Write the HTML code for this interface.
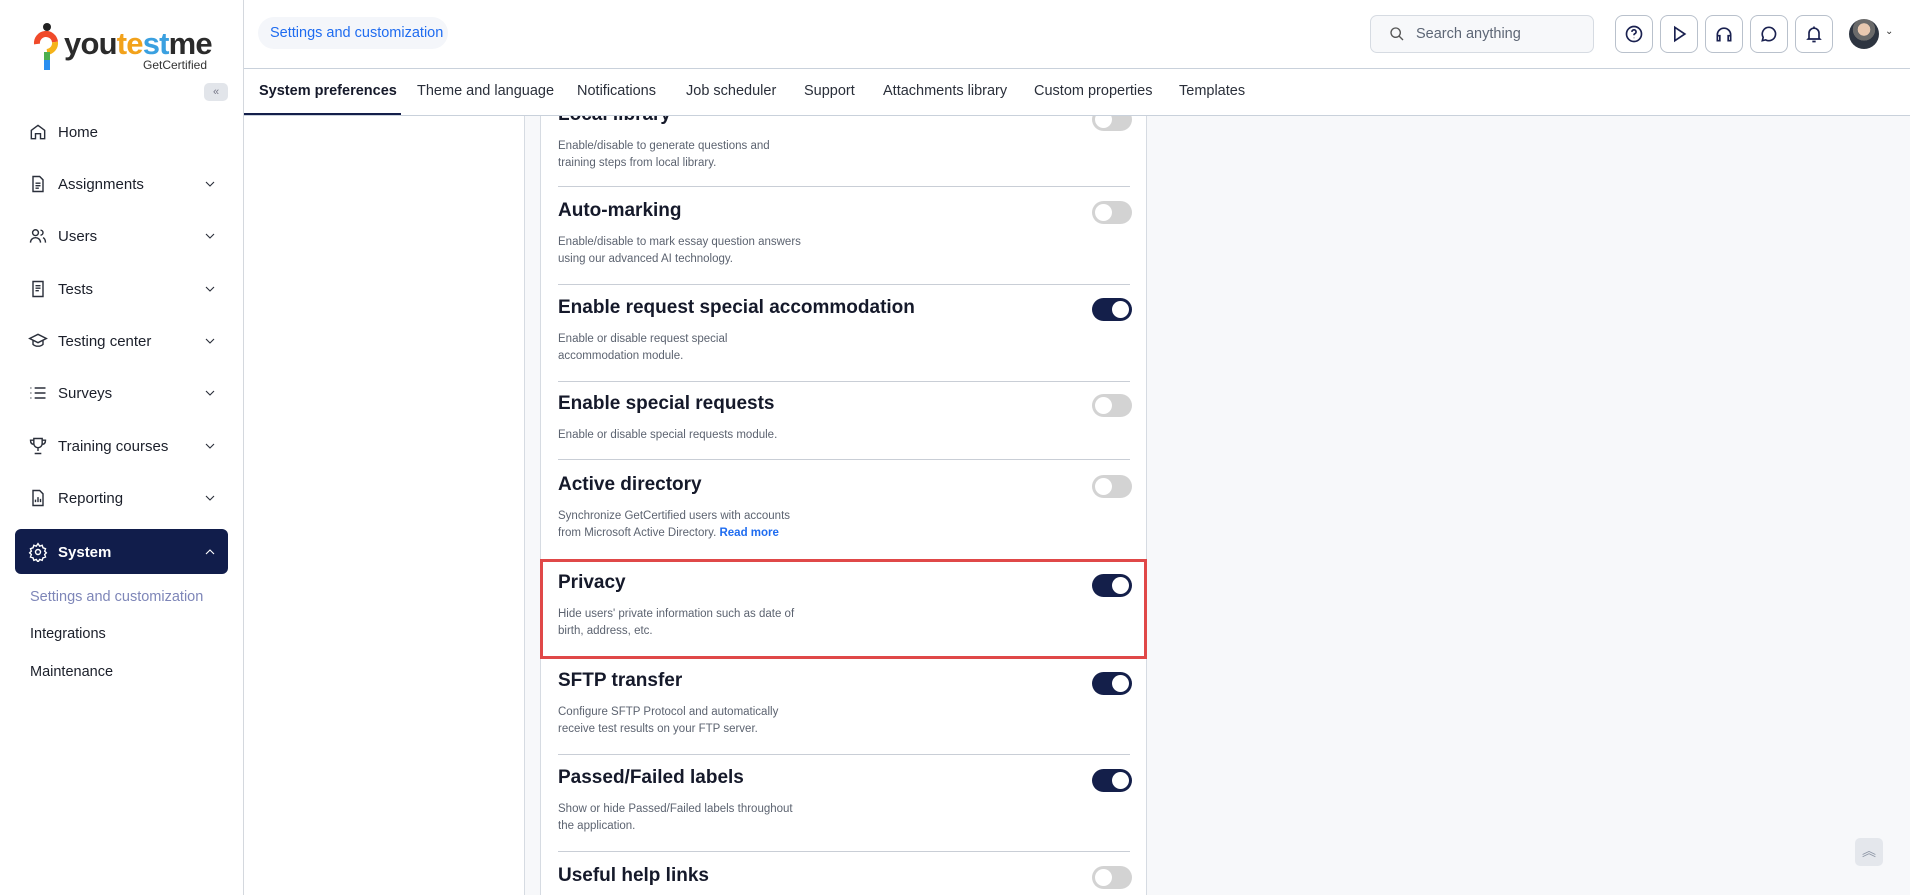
<!DOCTYPE html>
<html><head><meta charset="utf-8"><style>
*{box-sizing:border-box;margin:0;padding:0}
body{width:1910px;height:895px;overflow:hidden;background:#fff;font-family:"Liberation Sans",sans-serif;color:#1b1f2a;position:relative}
.abs{position:absolute}
.sb{left:0;top:0;width:244px;height:895px;border-right:1px solid #d4d8de;background:#fff}
.nav{position:absolute;left:28px;font-size:15px;color:#1b1f2a;display:flex;align-items:center;width:190px}
.nav svg{width:20px;height:20px;margin-right:10px;stroke:#2a2f3a;fill:none;stroke-width:1.7}
.nav .ch{position:absolute;right:0;width:16px;height:16px;margin:0}
.hdr{left:244px;top:0;width:1666px;height:69px;border-bottom:1px solid #c9d1db}
.tabs{left:244px;top:69px;width:1666px;height:47px;border-bottom:1px solid #c9d1db;font-size:14.5px;color:#2a2f3a;background:#fff;z-index:2}
.tab{position:absolute;top:14px}
.ib{position:absolute;top:15px;width:38px;height:38px;border:1px solid #b9c1cc;border-radius:8px;display:flex;align-items:center;justify-content:center}
.ib svg{width:20px;height:20px;stroke:#1a2150;fill:none;stroke-width:2}
.card{left:540px;top:116px;width:607px;height:779px;background:#fff;border-left:1px solid #d6dbe2;border-right:1px solid #d6dbe2;overflow:hidden}
.t{position:absolute;left:17px;font-size:19px;font-weight:bold;color:#15192a}
.d{position:absolute;left:17px;font-size:11.5px;line-height:17px;color:#5c6370}
.sep{position:absolute;left:17px;width:572px;height:1px;background:#c9ced6}
.tg{position:absolute;left:551px;width:40px;height:23px;border-radius:12px;background:#d3d3d3}
.tg::after{content:"";position:absolute;left:3px;top:3px;width:17px;height:17px;border-radius:50%;background:#fff}
.tg.on{background:#141f4a}
.tg.on::after{left:20px}
</style></head><body>
<div class="abs sb">
 <svg class="abs" style="left:32px;top:22px" width="30" height="52" viewBox="0 0 30 52"><circle cx="15" cy="5" r="4" fill="#222"/><path d="M5 22a9 9 0 0 1 18-2" stroke="#f04a2a" stroke-width="6" fill="none"/><path d="M23 20a9 9 0 0 1-8 10" stroke="#f5b31a" stroke-width="6" fill="none"/><path d="M15 30v8" stroke="#4caf50" stroke-width="6"/><path d="M15 38v10" stroke="#2a8ff0" stroke-width="6"/></svg>
 <div class="abs" style="left:64px;top:26px;font-size:31px;font-weight:bold;letter-spacing:-0.8px;color:#2b2b2b">you<span style="color:#f2a21b">te</span><span style="color:#3aa0e0">st</span>me</div>
 <div class="abs" style="left:143px;top:58px;font-size:12px;color:#333">GetCertified</div>
 <div class="abs" style="left:204px;top:83px;width:24px;height:18px;border-radius:5px;background:#e2e5ea;font-size:11px;color:#778;text-align:center;line-height:18px">«</div>
 <div class="nav" style="top:122px"><svg viewBox="0 0 24 24"><path d="M4 20V10l8-6 8 6v10h-5v-6h-6v6z"/></svg>Home</div>
 <div class="nav" style="top:174px"><svg viewBox="0 0 24 24"><path d="M6 3h8l4 4v14H6z M9 11h6M9 14h6M9 17h4"/></svg>Assignments<svg class="ch" viewBox="0 0 24 24"><path d="M6 9l6 6 6-6"/></svg></div>
 <div class="nav" style="top:226px"><svg viewBox="0 0 24 24"><circle cx="9" cy="8" r="3.5"/><path d="M3 20c0-4 3-6 6-6s6 2 6 6M15 5a3 3 0 0 1 0 6M18 14c2 1 3 3 3 6"/></svg>Users<svg class="ch" viewBox="0 0 24 24"><path d="M6 9l6 6 6-6"/></svg></div>
 <div class="nav" style="top:279px"><svg viewBox="0 0 24 24"><path d="M6 3h12v18H6z M9 8h6M9 11h6M9 14h4"/></svg>Tests<svg class="ch" viewBox="0 0 24 24"><path d="M6 9l6 6 6-6"/></svg></div>
 <div class="nav" style="top:331px"><svg viewBox="0 0 24 24"><path d="M2 9l10-5 10 5-10 5z M6 11v5c3 3 9 3 12 0v-5"/></svg>Testing center<svg class="ch" viewBox="0 0 24 24"><path d="M6 9l6 6 6-6"/></svg></div>
 <div class="nav" style="top:383px"><svg viewBox="0 0 24 24"><path d="M8 6h13M8 12h13M8 18h13M3 6h1M3 12h1M3 18h1"/></svg>Surveys<svg class="ch" viewBox="0 0 24 24"><path d="M6 9l6 6 6-6"/></svg></div>
 <div class="nav" style="top:436px"><svg viewBox="0 0 24 24"><path d="M7 3h10v6a5 5 0 0 1-10 0z M7 5H3c0 4 2 5 4 5M17 5h4c0 4-2 5-4 5M12 14v4M8 21h8"/></svg>Training courses<svg class="ch" viewBox="0 0 24 24"><path d="M6 9l6 6 6-6"/></svg></div>
 <div class="nav" style="top:488px"><svg viewBox="0 0 24 24"><path d="M6 3h8l4 4v14H6z M9 17v-3M12 17v-6M15 17v-4"/></svg>Reporting<svg class="ch" viewBox="0 0 24 24"><path d="M6 9l6 6 6-6"/></svg></div>
 <div class="abs" style="left:15px;top:529px;width:213px;height:45px;border-radius:6px;background:#111d4b"></div>
 <div class="nav" style="top:542px;color:#fff;font-weight:bold"><svg viewBox="0 0 24 24" style="stroke:#fff"><circle cx="12" cy="12" r="3"/><path d="M12 2l2 3 3-1 1 3 3 1-1 3 2 2-2 2 1 3-3 1-1 3-3-1-2 3-2-3-3 1-1-3-3-1 1-3-2-2 2-2-1-3 3-1 1-3 3 1z"/></svg>System<svg class="ch" viewBox="0 0 24 24" style="stroke:#fff"><path d="M6 15l6-6 6 6"/></svg></div>
 <div class="abs" style="left:30px;top:589px;font-size:14.5px;color:#7e86b8">Settings and customization</div>
 <div class="abs" style="left:30px;top:626px;font-size:14.5px">Integrations</div>
 <div class="abs" style="left:30px;top:664px;font-size:14.5px">Maintenance</div>
</div>
<div class="abs hdr">
 <div class="abs" style="left:14px;top:17px;width:190px;height:32px;border-radius:16px;background:#f4f6fa;color:#1f6cf0;font-size:14.5px;line-height:32px;padding-left:12px">Settings and customization</div>
 <div class="abs" style="left:1126px;top:15px;width:224px;height:38px;border:1px solid #d6dbe2;border-radius:7px;background:#f7f8fa;font-size:14.5px;color:#5d6675;line-height:36px;padding-left:45px">Search anything<svg class="abs" style="left:18px;top:10px" width="16" height="16" viewBox="0 0 24 24" fill="none" stroke="#555" stroke-width="2"><circle cx="10" cy="10" r="7"/><path d="M15 15l6 6"/></svg></div>
 <div class="ib" style="left:1371px"><svg viewBox="0 0 24 24"><circle cx="12" cy="12" r="9"/><path d="M9.5 9.5a2.5 2.5 0 1 1 3 2.4c-.5.2-.5.6-.5 1.6M12 16.5v.5"/></svg></div>
 <div class="ib" style="left:1416px"><svg viewBox="0 0 24 24"><path d="M7 4l12 8-12 8z"/></svg></div>
 <div class="ib" style="left:1461px"><svg viewBox="0 0 24 24"><path d="M4 18v-5a8 8 0 0 1 16 0v5M4 14h3v6H4zM17 14h3v6h-3z"/></svg></div>
 <div class="ib" style="left:1506px"><svg viewBox="0 0 24 24"><path d="M12 4a8 8 0 1 1-4 15l-4 1 1-4a8 8 0 0 1 7-12z"/></svg></div>
 <div class="ib" style="left:1551px"><svg viewBox="0 0 24 24"><path d="M6 17V11a6 6 0 0 1 12 0v6l1 1H5zM10 21h4M12 3v2"/></svg></div>
 <div class="abs" style="left:1605px;top:19px;width:30px;height:30px;border-radius:50%;background:radial-gradient(circle at 50% 35%,#e8c8b0 0 25%,#6a6a6a 26% 45%,#2d3440 46%)"></div>
 <div class="abs" style="left:1641px;top:26px;font-size:10px;color:#333">⌄</div>
</div>
<div class="abs tabs">
 <div class="tab" style="left:15px;font-weight:bold;color:#15192a">System preferences</div>
 <div class="abs" style="left:0;top:44px;width:157px;height:2px;background:#141f4a"></div>
 <div class="tab" style="left:173px">Theme and language</div>
 <div class="tab" style="left:333px">Notifications</div>
 <div class="tab" style="left:442px">Job scheduler</div>
 <div class="tab" style="left:560px">Support</div>
 <div class="tab" style="left:639px">Attachments library</div>
 <div class="tab" style="left:790px">Custom properties</div>
 <div class="tab" style="left:935px">Templates</div>
</div>
<div class="abs" style="left:524px;top:116px;width:1px;height:779px;background:#d6dbe2"></div>
<div class="abs" style="left:525px;top:116px;width:15px;height:779px;background:#f7f8fa"></div>
<div class="abs" style="left:1147px;top:116px;width:763px;height:779px;background:#f7f8fa"></div>
<div class="abs card">
 <div class="t" style="top:-12px">Local library</div><div class="tg" style="top:-8px"></div>
 <div class="d" style="top:22px">Enable/disable to generate questions and<br>training steps from local library.</div>
 <div class="sep" style="top:70px"></div>
 <div class="t" style="top:84px">Auto-marking</div><div class="tg" style="top:85px"></div>
 <div class="d" style="top:118px">Enable/disable to mark essay question answers<br>using our advanced AI technology.</div>
 <div class="sep" style="top:168px"></div>
 <div class="t" style="top:181px">Enable request special accommodation</div><div class="tg on" style="top:182px"></div>
 <div class="d" style="top:215px">Enable or disable request special<br>accommodation module.</div>
 <div class="sep" style="top:265px"></div>
 <div class="t" style="top:277px">Enable special requests</div><div class="tg" style="top:278px"></div>
 <div class="d" style="top:311px">Enable or disable special requests module.</div>
 <div class="sep" style="top:343px"></div>
 <div class="t" style="top:358px">Active directory</div><div class="tg" style="top:359px"></div>
 <div class="d" style="top:392px">Synchronize GetCertified users with accounts<br>from Microsoft Active Directory. <b style="color:#1f6cf0;font-weight:bold">Read more</b></div>
 <div class="t" style="top:456px">Privacy</div><div class="tg on" style="top:458px"></div>
 <div class="d" style="top:490px">Hide users' private information such as date of<br>birth, address, etc.</div>
 <div class="t" style="top:554px">SFTP transfer</div><div class="tg on" style="top:556px"></div>
 <div class="d" style="top:588px">Configure SFTP Protocol and automatically<br>receive test results on your FTP server.</div>
 <div class="sep" style="top:638px"></div>
 <div class="t" style="top:651px">Passed/Failed labels</div><div class="tg on" style="top:653px"></div>
 <div class="d" style="top:685px">Show or hide Passed/Failed labels throughout<br>the application.</div>
 <div class="sep" style="top:735px"></div>
 <div class="t" style="top:749px">Useful help links</div><div class="tg" style="top:750px"></div>
</div>
<div class="abs" style="left:540px;top:559px;width:607px;height:100px;border:3px solid #e04848"></div>
<div class="abs" style="left:1855px;top:838px;width:28px;height:28px;border-radius:5px;background:#e4e7ec;color:#8a93a3;font-size:14px;text-align:center;line-height:26px">︽</div>
</body></html>
